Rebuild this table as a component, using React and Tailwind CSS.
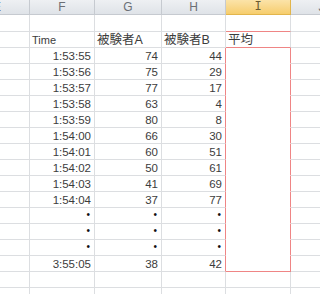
import React from 'react';

const font = { fontFamily: '"Liberation Sans", "Noto Sans CJK JP", sans-serif' };

const dot = <span className="text-[#111] text-[10px] pb-[2px] pr-[1px]">•</span>;

const rows = [
    ['1:53:55', 74, 44],
    ['1:53:56', 75, 29],
    ['1:53:57', 77, 17],
    ['1:53:58', 63, 4],
    ['1:53:59', 80, 8],
    ['1:54:00', 66, 30],
    ['1:54:01', 60, 51],
    ['1:54:02', 50, 61],
    ['1:54:03', 41, 69],
    ['1:54:04', 37, 77],
    [dot, dot, dot],
    [dot, dot, dot],
    [dot, dot, dot],
    ['3:55:05', 38, 42],
];

const Cell = ({ w, children, className = '' }) => (
    <div className={`${w} h-full shrink-0 border-r border-b border-[#dcdee1] flex items-end justify-end pr-[3px] pb-[1px] leading-none ${className}`}>
        {children}
    </div>
);

const HeaderCell = ({ w, label, active }) => (
    <div
        className={`${w} h-full shrink-0 border-r border-b flex items-center justify-center text-[12px] leading-none ${
            active
                ? 'bg-gradient-to-b from-[#fbe3a8] to-[#f6cd6c] border-[#e2b54c] text-[#6a5a30] font-["Liberation_Mono"]'
                : 'bg-gradient-to-b from-[#eef0f3] to-[#dfe3e8] border-[#c6cad0] text-[#6b6f75]'
        }`}
    >
        {label}
    </div>
);

export default function App() {
    return (
        <div className="w-[320px] h-[294px] overflow-hidden bg-white text-[#3c3c3c]" style={font}>
            <div className="-ml-[35px] flex flex-col">
                <div className="flex h-[15px]">
                    <HeaderCell w="w-[65px]" label="E" />
                    <HeaderCell w="w-[65px]" label="F" />
                    <HeaderCell w="w-[67px]" label="G" />
                    <HeaderCell w="w-[64px]" label="H" />
                    <HeaderCell w="w-[65px]" label="I" active />
                    <HeaderCell w="w-[62px]" label="J" />
                </div>

                <div className="flex h-[17px]">
                    <Cell w="w-[65px]" />
                    <Cell w="w-[65px]" />
                    <Cell w="w-[67px]" />
                    <Cell w="w-[64px]" />
                    <Cell w="w-[65px]" className="border-b-[#ef8585]" />
                    <Cell w="w-[62px]" />
                </div>

                <div className="flex h-[16px]">
                    <Cell w="w-[65px]" />
                    <Cell w="w-[65px]" className="justify-start pl-[2px] text-[11px]">Time</Cell>
                    <Cell w="w-[67px]" className="justify-start pl-[2px] text-[12.5px]">被験者A</Cell>
                    <Cell w="w-[64px]" className="justify-start pl-[2px] text-[12.5px]">被験者B</Cell>
                    <Cell w="w-[65px]" className="justify-start pl-[2px] text-[12.5px] border-b-[#ef8585]">平均</Cell>
                    <Cell w="w-[62px]" />
                </div>

                {rows.map((r, i) => {
                    const last = i === rows.length - 1;
                    return (
                        <div key={i} className="flex h-[16px] text-[11.5px]">
                            <Cell w="w-[65px]" />
                            <Cell w="w-[65px]">{r[0]}</Cell>
                            <Cell w="w-[67px]">{r[1]}</Cell>
                            <Cell w="w-[64px]" className="border-r-[#ef8585]">{r[2]}</Cell>
                            <Cell
                                w="w-[65px]"
                                className={`border-r-[#ef8585] ${last ? 'border-b-[#ef8585]' : 'border-b-white'}`}
                            />
                            <Cell w="w-[62px]" />
                        </div>
                    );
                })}

                {[0, 1].map((i) => (
                    <div key={i} className="flex h-[16px]">
                        <Cell w="w-[65px]" />
                        <Cell w="w-[65px]" />
                        <Cell w="w-[67px]" />
                        <Cell w="w-[64px]" />
                        <Cell w="w-[65px]" />
                        <Cell w="w-[62px]" />
                    </div>
                ))}
            </div>
        </div>
    );
}
